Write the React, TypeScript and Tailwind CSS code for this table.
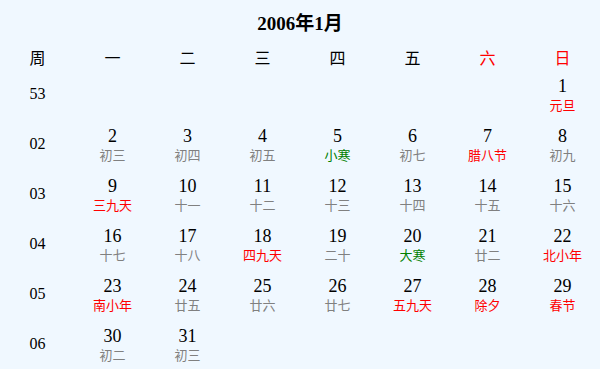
import React from "react";

type Cell = { d: number; l: string; c?: "r" | "g" } | null;

const rows: { w: string; cells: Cell[] }[] = [
  { w: "53", cells: [null, null, null, null, null, null, { d: 1, l: "元旦", c: "r" }] },
  {
    w: "02",
    cells: [
      { d: 2, l: "初三" },
      { d: 3, l: "初四" },
      { d: 4, l: "初五" },
      { d: 5, l: "小寒", c: "g" },
      { d: 6, l: "初七" },
      { d: 7, l: "腊八节", c: "r" },
      { d: 8, l: "初九" },
    ],
  },
  {
    w: "03",
    cells: [
      { d: 9, l: "三九天", c: "r" },
      { d: 10, l: "十一" },
      { d: 11, l: "十二" },
      { d: 12, l: "十三" },
      { d: 13, l: "十四" },
      { d: 14, l: "十五" },
      { d: 15, l: "十六" },
    ],
  },
  {
    w: "04",
    cells: [
      { d: 16, l: "十七" },
      { d: 17, l: "十八" },
      { d: 18, l: "四九天", c: "r" },
      { d: 19, l: "二十" },
      { d: 20, l: "大寒", c: "g" },
      { d: 21, l: "廿二" },
      { d: 22, l: "北小年", c: "r" },
    ],
  },
  {
    w: "05",
    cells: [
      { d: 23, l: "南小年", c: "r" },
      { d: 24, l: "廿五" },
      { d: 25, l: "廿六" },
      { d: 26, l: "廿七" },
      { d: 27, l: "五九天", c: "r" },
      { d: 28, l: "除夕", c: "r" },
      { d: 29, l: "春节", c: "r" },
    ],
  },
  {
    w: "06",
    cells: [{ d: 30, l: "初二" }, { d: 31, l: "初三" }, null, null, null, null, null],
  },
];

const heads = ["周", "一", "二", "三", "四", "五", "六", "日"];
const serif = "font-['Liberation_Serif','Noto_Sans_CJK_SC',serif]";

export default function App() {
  return (
    <div className="w-[600px] h-[369px] bg-[#f0f8ff] text-black overflow-hidden">
      <div className={`h-[48px] flex items-center justify-center text-[19px] font-bold ${serif}`}>
        2006年1月
      </div>
      <div className={`grid grid-cols-8 h-[21px] items-center text-[16px] leading-[21px] ${serif}`}>
        {heads.map((h, i) => (
          <div key={h} className={`text-center ${i >= 6 ? "text-[#ff0000]" : ""}`}>
            {h}
          </div>
        ))}
      </div>
      {rows.map((r) => (
        <div key={r.w} className="grid grid-cols-8 h-[50px]">
          <div className={`flex items-center justify-center text-[16px] ${serif}`}>{r.w}</div>
          {r.cells.map((c, i) => (
            <div key={i} className="flex flex-col items-center justify-center">
              {c && (
                <>
                  <div className={`text-[18px] leading-[20px] ${serif}`}>{c.d}</div>
                  <div
                    className={`text-[13px] leading-[17px] font-['Noto_Sans_CJK_SC',sans-serif] ${
                      c.c === "r" ? "text-[#ff0000]" : c.c === "g" ? "text-[#008000]" : "text-[#808080]"
                    }`}
                  >
                    {c.l}
                  </div>
                </>
              )}
            </div>
          ))}
        </div>
      ))}
    </div>
  );
}
